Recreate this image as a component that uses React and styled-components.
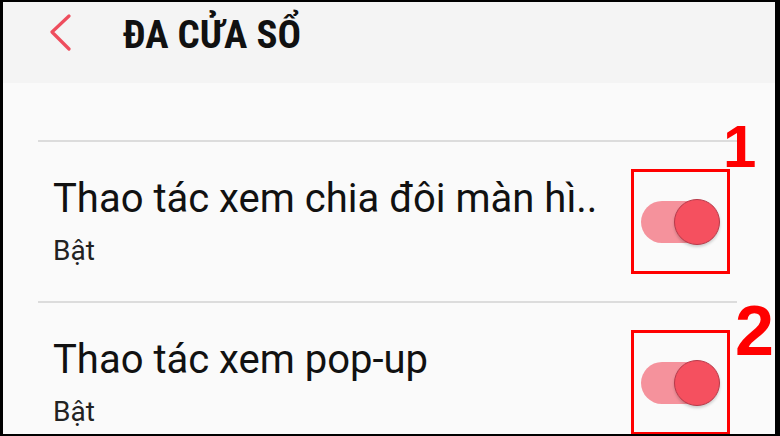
import React from "react"
import styled, { createGlobalStyle } from "styled-components"

const GlobalStyle = createGlobalStyle`
  html, body {
    margin: 0;
    padding: 0;
    background: #000;
  }
  * {
    box-sizing: border-box;
  }
`

const Frame = styled.div`
  width: 780px;
  height: 436px;
  border-style: solid;
  border-color: #000;
  border-width: 2px 5px 2px 3px;
  background: #fafafa;
  overflow: hidden;
  font-family: Roboto, "Noto Sans", sans-serif;
  color: #111;
`

const Header = styled.header`
  height: 81px;
  background: #f4f4f4;
  display: flex;
  align-items: center;
  padding: 0 0 14px 46px;
`

const BackButton = styled.svg`
  width: 22px;
  height: 38px;
  flex-shrink: 0;
  margin-bottom: 6px;
`

const Title = styled.h1`
  margin: 0 0 0 52px;
  font-family: "Roboto Condensed", "DejaVu Sans Condensed", Roboto, sans-serif;
  font-weight: 700;
  font-size: 39px;
  line-height: 1;
  color: #111;
`

const List = styled.div`
  padding-top: 57px;
`

const Row = styled.div`
  position: relative;
  height: 161px;
  margin: 0 38px 0 35px;
  border-top: 2px solid #dcdcdc;
  display: flex;
  align-items: center;
  padding-left: 15px;
`

const TextBlock = styled.div`
  flex: 1;
  min-width: 0;
  display: flex;
  flex-direction: column;
  gap: 12px;
`

const RowTitle = styled.div`
  font-size: 40px;
  line-height: 46px;
  white-space: nowrap;
`

const RowSub = styled.div`
  font-size: 28px;
  line-height: 34px;
  color: #222;
`

const Highlight = styled.div`
  position: relative;
  width: 99px;
  height: 105px;
  margin-right: 7px;
  border: 3px solid #ff0000;
  display: flex;
  align-items: center;
  justify-content: center;
  flex-shrink: 0;
`

const Marker = styled.span`
  position: absolute;
  left: ${p => p.$left}px;
  top: ${p => p.$top}px;
  font-family: "Liberation Sans", Arial, sans-serif;
  font-weight: 700;
  font-size: ${p => p.$size}px;
  line-height: 1;
  color: #ff0000;
`

const Track = styled.div`
  position: relative;
  width: 79px;
  height: 46px;
  display: flex;
  align-items: center;
  &::before {
    content: "";
    width: 70px;
    height: 42px;
    border-radius: 21px;
    background: #f5929c;
  }
`

const Thumb = styled.div`
  position: absolute;
  right: 0;
  top: 0;
  width: 46px;
  height: 46px;
  border-radius: 50%;
  background: #f5505f;
  border: 1px solid #b83a4a;
  box-shadow: 0 2px 3px rgba(0, 0, 0, 0.18);
`

const Toggle = () => (
  <Track>
    <Thumb />
  </Track>
)

const rows = [
  { title: "Thao tác xem chia đôi màn hì..", sub: "Bật", mark: "1", left: 89, top: -55, size: 60 },
  { title: "Thao tác xem pop-up", sub: "Bật", mark: "2", left: 101, top: -37, size: 70 },
]

const App = () => {
  return (
    <>
      <GlobalStyle />
      <Frame>
        <Header>
          <BackButton viewBox="0 0 22 38">
            <path
              d="M20 2 L3 18 L20 35"
              fill="none"
              stroke="#ee4d5d"
              strokeWidth="3.2"
              strokeLinecap="round"
              strokeLinejoin="round"
            />
          </BackButton>
          <Title>ĐA CỬA SỔ</Title>
        </Header>
        <List>
          {rows.map(r => (
            <Row key={r.mark}>
              <TextBlock>
                <RowTitle>{r.title}</RowTitle>
                <RowSub>{r.sub}</RowSub>
              </TextBlock>
              <Highlight>
                <Toggle />
                <Marker $left={r.left} $top={r.top} $size={r.size}>
                  {r.mark}
                </Marker>
              </Highlight>
            </Row>
          ))}
        </List>
      </Frame>
    </>
  )
}

export default App
